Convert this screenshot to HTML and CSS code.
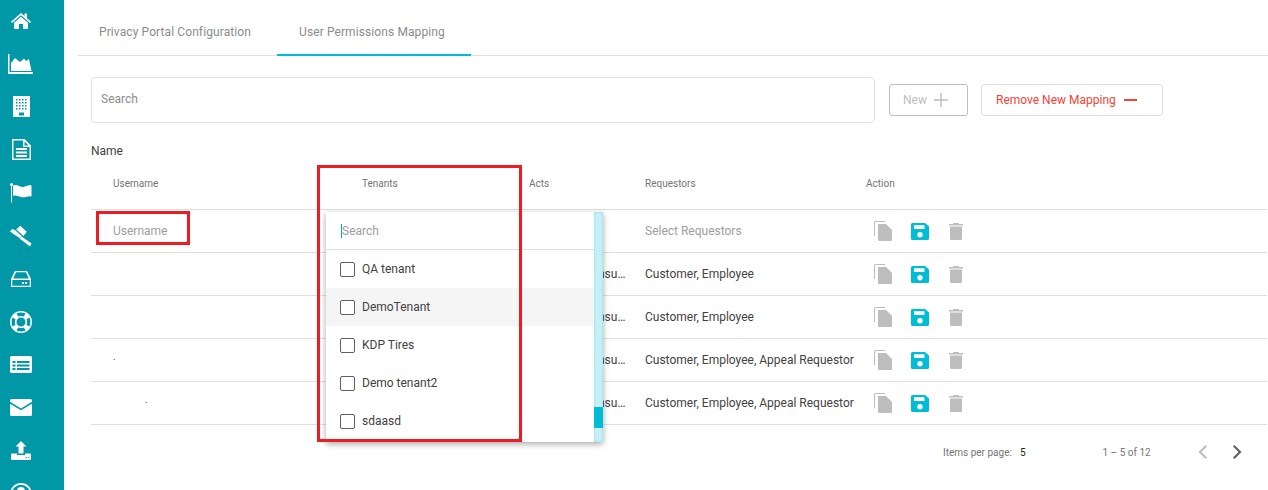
FILE: index.html
```html
<!DOCTYPE html>
<html lang="en">
<head>
    <meta charset="UTF-8">
    <title>User Permissions Mapping</title>
    <link rel="stylesheet" href="styles.css">
</head>
<body>
<div class="layout">
    <nav class="sidebar">
        <a class="nav-item"><svg width="20" height="18" viewBox="0 0 20 18"><path d="M10 1 13.5 4V1.5H16V6.2L20 9.7 19 11 10 3.2 1 11 0 9.7Z"/><path d="M10 4.8 17 10.8V17H12V12H8V17H3V10.8Z"/></svg></a>
        <a class="nav-item"><svg width="26" height="20" viewBox="0 0 26 20"><path d="M0 0H1.5V18H25V20H0Z"/><path d="M3 17V9L7 4 12 8 16 4.500 18 7 21 5 23.500 17Z"/></svg></a>
        <a class="nav-item"><svg width="18" height="22" viewBox="0 0 18 22"><path fill-rule="evenodd" d="M1 0H18V21H1ZM4 3V4.500H5.500V3ZM7 3V4.500H8.500V3ZM10 3V4.500H11.500V3ZM13 3V4.500H14.500V3ZM4 6V7.500H5.500V6ZM7 6V7.500H8.500V6ZM10 6V7.500H11.500V6ZM13 6V7.500H14.500V6ZM4 9V10.500H5.500V9ZM7 9V10.500H8.500V9ZM10 9V10.500H11.500V9ZM13 9V10.500H14.500V9ZM4 12V13.500H5.500V12ZM7 12V13.500H8.500V12ZM10 12V13.500H11.500V12ZM13 12V13.500H14.500V12ZM7 16.500V19.500H12V16.500Z"/></svg></a>
        <a class="nav-item"><svg width="19" height="21" viewBox="0 0 19 21"><path fill-rule="evenodd" d="M0 0H12.500L19 6.500V21H0ZM1.500 1.500V19.500H17.500V8H11V1.500ZM12.500 2.500V6.500H16.500ZM4 9H15V11H4ZM4 12.500H15V14.500H4ZM4 16H15V18H4Z"/></svg></a>
        <a class="nav-item"><svg width="22" height="20" viewBox="0 0 22 20"><path d="M1 1.500H2V19.500H1Z"/><circle cx="1.500" cy="1.500" r="1.500"/><path d="M3 2.500C7 .5 11 5 14 3.800 17 2.700 19 2 21.500 2.500V13.500C18 12.500 16 14.800 12 14.300 8.500 13.800 6 11.500 3 13Z"/></svg></a>
        <a class="nav-item"><svg width="22" height="22" viewBox="0 0 22 22"><path d="M10.300 .7 16.800 6.700 13.500 11 6.200 4.500Z"/><path d="M5 5 12 11.500 9.500 13 3.500 9 0 6.500 2 4Z"/><path d="M11.500 11.500 21.500 18.500 20 21.500 9.500 13.500Z"/></svg></a>
        <a class="nav-item"><svg width="20" height="16" viewBox="0 0 20 16"><path fill-rule="evenodd" d="M4 0H16L20 8V16H0V8ZM5 1.300 2.200 7.500H17.800L15 1.300ZM1.300 9V14.700H18.700V9ZM11 11H13V13H11ZM14 11H16V13H14Z"/></svg></a>
        <a class="nav-item"><svg width="22" height="22" viewBox="0 0 22 22"><path fill-rule="evenodd" d="M11 0A11 11 0 1 1 11 22 11 11 0 0 1 11 0ZM11 6.500A4.500 4.500 0 1 0 11 15.500 4.500 4.500 0 0 0 11 6.500ZM6.500 2.500 8.200 5.500C10 4.700 12 4.700 13.800 5.500L15.500 2.500C13 1.300 9 1.300 6.500 2.500ZM2.500 6.500C1.300 9 1.300 13 2.500 15.500L5.500 13.800C4.700 12 4.700 10 5.500 8.200ZM19.500 6.500 16.500 8.200C17.300 10 17.300 12 16.500 13.800L19.500 15.500C20.700 13 20.700 9 19.500 6.500ZM8.200 16.500 6.500 19.500C9 20.700 13 20.700 15.500 19.500L13.800 16.500C12 17.300 10 17.300 8.200 16.500Z"/></svg></a>
        <a class="nav-item"><svg width="22" height="17" viewBox="0 0 22 17"><path fill-rule="evenodd" d="M1.500 0H20.500Q22 0 22 1.500V15.500Q22 17 20.500 17H1.500Q0 17 0 15.500V1.500Q0 0 1.500 0ZM2.500 5V7H5.500V5ZM7 5V7H19.500V5ZM2.500 8.500V10.500H5.500V8.500ZM7 8.500V10.500H19.500V8.500ZM2.500 12V14H5.500V12ZM7 12V14H19.500V12Z"/></svg></a>
        <a class="nav-item"><svg width="22" height="17" viewBox="0 0 22 17"><path d="M0 1.500Q0 0 1.500 0H20.500Q22 0 22 1.500V2.800L11 9.500 0 2.800Z"/><path d="M0 4.800 11 11.300 22 4.800V15.500Q22 17 20.500 17H1.500Q0 17 0 15.500Z"/></svg></a>
        <a class="nav-item"><svg width="20" height="19" viewBox="0 0 20 19"><path d="M10 0 15.500 5.500H12.500V12.500H7.500V5.500H4.500Z"/><path fill-rule="evenodd" d="M1 12.500H6V14H14V12.500H19Q20 12.500 20 13.500V18Q20 19 19 19H1Q0 19 0 18V13.500Q0 12.500 1 12.500ZM14.500 16V17H15.700V16ZM17 16V17H18.200V16Z"/></svg></a>
        <a class="nav-item"><svg width="22" height="22" viewBox="0 0 22 22"><path fill-rule="evenodd" d="M11 0A11 11 0 1 1 11 22 11 11 0 0 1 11 0ZM11 1.800A9.200 9.200 0 1 0 11 20.200 9.200 9.200 0 0 0 11 1.800ZM11 4A4 4 0 1 1 11 12 4 4 0 0 1 11 4Z"/></svg></a>
    </nav>

    <main class="content">
        <div class="tabs">
            <div class="tab">Privacy Portal Configuration</div>
            <div class="tab tab-active">User Permissions Mapping</div>
        </div>

        <div class="toolbar">
            <div class="search-box">Search</div>
            <button class="btn btn-new">New <svg width="14" height="14" viewBox="0 0 14 14"><path d="M6.300 0H7.700V6.300H14V7.700H7.700V14H6.300V7.700H0V6.300H6.300Z"/></svg></button>
            <button class="btn btn-remove">Remove New Mapping <svg width="13" height="2" viewBox="0 0 13 2"><path d="M0 0H13V2H0Z"/></svg></button>
        </div>

        <div class="name-label">Name</div>

        <div class="table-wrap">
            <div class="row row-head">
                <div>Username</div>
                <div>Tenants</div>
                <div>Acts</div>
                <div>Requestors</div>
                <div>Action</div>
            </div>

            <div class="row">
                <div class="muted">Username</div>
                <div></div>
                <div></div>
                <div class="muted">Select Requestors</div>
                <div class="actions">
                    <svg class="ico" width="18" height="20" viewBox="0 0 18 20"><path d="M0 1.500Q0 0 1.500 0H11V1H1V15H0Z"/><path d="M4 3H12L18 9V18.500Q18 20 16.500 20H5.500Q4 20 4 18.500Z"/></svg>
                    <svg class="ico ico-save" width="18" height="17" viewBox="0 0 18 17"><path fill-rule="evenodd" d="M1.500 0H14L18 3.500V15.500Q18 17 16.500 17H1.500Q0 17 0 15.500V1.500Q0 0 1.500 0ZM3 2.200V6H13.500V2.200ZM9 9A2.700 2.700 0 1 0 9 14.400 2.700 2.700 0 0 0 9 9Z"/></svg>
                    <svg class="ico ico-trash" width="14" height="17" viewBox="0 0 14 17"><path d="M4.500 0H9.500L10 1H14V2.500H0V1H4Z"/><path d="M1 3.500H13V15.500Q13 17 11.500 17H2.500Q1 17 1 15.500Z"/></svg>
                </div>
            </div>

            <div class="row">
                <div></div>
                <div></div>
                <div class="clip">California Consumer Privacy Act</div>
                <div class="clip">Customer, Employee</div>
                <div class="actions">
                    <svg class="ico" width="18" height="20" viewBox="0 0 18 20"><path d="M0 1.500Q0 0 1.500 0H11V1H1V15H0Z"/><path d="M4 3H12L18 9V18.500Q18 20 16.500 20H5.500Q4 20 4 18.500Z"/></svg>
                    <svg class="ico ico-save" width="18" height="17" viewBox="0 0 18 17"><path fill-rule="evenodd" d="M1.500 0H14L18 3.500V15.500Q18 17 16.500 17H1.500Q0 17 0 15.500V1.500Q0 0 1.500 0ZM3 2.200V6H13.500V2.200ZM9 9A2.700 2.700 0 1 0 9 14.400 2.700 2.700 0 0 0 9 9Z"/></svg>
                    <svg class="ico ico-trash" width="14" height="17" viewBox="0 0 14 17"><path d="M4.500 0H9.500L10 1H14V2.500H0V1H4Z"/><path d="M1 3.500H13V15.500Q13 17 11.500 17H2.500Q1 17 1 15.500Z"/></svg>
                </div>
            </div>

            <div class="row">
                <div></div>
                <div></div>
                <div class="clip">California Consumer Privacy Act</div>
                <div class="clip">Customer, Employee</div>
                <div class="actions">
                    <svg class="ico" width="18" height="20" viewBox="0 0 18 20"><path d="M0 1.500Q0 0 1.500 0H11V1H1V15H0Z"/><path d="M4 3H12L18 9V18.500Q18 20 16.500 20H5.500Q4 20 4 18.500Z"/></svg>
                    <svg class="ico ico-save" width="18" height="17" viewBox="0 0 18 17"><path fill-rule="evenodd" d="M1.500 0H14L18 3.500V15.500Q18 17 16.500 17H1.500Q0 17 0 15.500V1.500Q0 0 1.500 0ZM3 2.200V6H13.500V2.200ZM9 9A2.700 2.700 0 1 0 9 14.400 2.700 2.700 0 0 0 9 9Z"/></svg>
                    <svg class="ico ico-trash" width="14" height="17" viewBox="0 0 14 17"><path d="M4.500 0H9.500L10 1H14V2.500H0V1H4Z"/><path d="M1 3.500H13V15.500Q13 17 11.500 17H2.500Q1 17 1 15.500Z"/></svg>
                </div>
            </div>

            <div class="row">
                <div class="redacted">.</div>
                <div></div>
                <div class="clip">California Consumer Privacy Act</div>
                <div class="clip">Customer, Employee, Appeal Requestor</div>
                <div class="actions">
                    <svg class="ico" width="18" height="20" viewBox="0 0 18 20"><path d="M0 1.500Q0 0 1.500 0H11V1H1V15H0Z"/><path d="M4 3H12L18 9V18.500Q18 20 16.500 20H5.500Q4 20 4 18.500Z"/></svg>
                    <svg class="ico ico-save" width="18" height="17" viewBox="0 0 18 17"><path fill-rule="evenodd" d="M1.500 0H14L18 3.500V15.500Q18 17 16.500 17H1.500Q0 17 0 15.500V1.500Q0 0 1.500 0ZM3 2.200V6H13.500V2.200ZM9 9A2.700 2.700 0 1 0 9 14.400 2.700 2.700 0 0 0 9 9Z"/></svg>
                    <svg class="ico ico-trash" width="14" height="17" viewBox="0 0 14 17"><path d="M4.500 0H9.500L10 1H14V2.500H0V1H4Z"/><path d="M1 3.500H13V15.500Q13 17 11.500 17H2.500Q1 17 1 15.500Z"/></svg>
                </div>
            </div>

            <div class="row">
                <div class="redacted redacted-far">.</div>
                <div></div>
                <div class="clip">California Consumer Privacy Act</div>
                <div class="clip">Customer, Employee, Appeal Requestor</div>
                <div class="actions">
                    <svg class="ico" width="18" height="20" viewBox="0 0 18 20"><path d="M0 1.500Q0 0 1.500 0H11V1H1V15H0Z"/><path d="M4 3H12L18 9V18.500Q18 20 16.500 20H5.500Q4 20 4 18.500Z"/></svg>
                    <svg class="ico ico-save" width="18" height="17" viewBox="0 0 18 17"><path fill-rule="evenodd" d="M1.500 0H14L18 3.500V15.500Q18 17 16.500 17H1.500Q0 17 0 15.500V1.500Q0 0 1.500 0ZM3 2.200V6H13.500V2.200ZM9 9A2.700 2.700 0 1 0 9 14.400 2.700 2.700 0 0 0 9 9Z"/></svg>
                    <svg class="ico ico-trash" width="14" height="17" viewBox="0 0 14 17"><path d="M4.500 0H9.500L10 1H14V2.500H0V1H4Z"/><path d="M1 3.500H13V15.500Q13 17 11.500 17H2.500Q1 17 1 15.500Z"/></svg>
                </div>
            </div>

            <div class="paginator">
                <span class="per-page">Items per page:</span>
                <span class="per-page-value">5</span>
                <span class="range">1 – 5 of 12</span>
                <svg class="chev chev-off" width="10" height="14" viewBox="0 0 10 14"><path d="M8.500 0 10 1.500 4.500 7 10 12.500 8.500 14 1.500 7Z"/></svg>
                <svg class="chev" width="10" height="14" viewBox="0 0 10 14"><path d="M1.500 0 0 1.500 5.500 7 0 12.500 1.500 14 8.500 7Z"/></svg>
            </div>
        </div>
    </main>
</div>

<!-- dropdown open over the table -->
<div class="dropdown">
    <div class="dropdown-main">
        <div class="dropdown-search"><span class="caret"></span>Search</div>
        <div class="option"><span class="checkbox"></span>QA tenant</div>
        <div class="option option-hover"><span class="checkbox"></span>DemoTenant</div>
        <div class="option"><span class="checkbox"></span>KDP Tires</div>
        <div class="option"><span class="checkbox"></span>Demo tenant2</div>
        <div class="option"><span class="checkbox"></span>sdaasd</div>
    </div>
    <div class="scroll-track"><div class="scroll-thumb"></div></div>
</div>

<!-- annotation boxes from the screenshot -->
<div class="mark mark-tenants"></div>
<div class="mark mark-username"></div>
</body>
</html>
```

FILE: styles.css
```css
* {
    box-sizing: border-box;
}
html, body {
    margin: 0;
    height: 490px;
    overflow: hidden;
}
body {
    position: relative;
    font-family: Roboto, "Liberation Sans", sans-serif;
    font-size: 12px;
    color: #424242;
    background-color: #FFFFFF;
}
.layout {
    display: flex;
    height: 490px;
}

/* sidebar */
.sidebar {
    width: 64px;
    flex: none;
    background-color: #0097A7;
    padding-top: 0;
    overflow: hidden;
}
.nav-item {
    display: flex;
    align-items: center;
    justify-content: center;
    width: 42px;
    height: 43px;
    margin-top: -1px;
    margin-bottom: 1px;
}
.nav-item svg {
    fill: #FFFFFF;
}

/* content */
.content {
    flex: 1;
    min-width: 0;
    padding-left: 14px;
}
.tabs {
    display: flex;
    height: 56px;
    margin-left: 0;
    border-bottom: 1px solid #E0E0E0;
}
.tab {
    width: 199px;
    padding-top: 25px;
    padding-left: 21px;
    font-size: 12px;
    letter-spacing: .1px;
    color: #8C8C8C;
}
.tab-active {
    width: 194px;
    padding-left: 22px;
    border-bottom: 2px solid #00BCD4;
    height: 56px;
}
.toolbar {
    display: flex;
    align-items: center;
    margin-top: 21px;
    margin-left: 13px;
}
.search-box {
    width: 784px;
    height: 46px;
    padding: 14px 9px;
    border: 1px solid #E0E0E0;
    border-radius: 4px;
    color: #8C8C8C;
}
.btn {
    display: flex;
    align-items: center;
    height: 32px;
    background: #FFFFFF;
    border-radius: 3px;
    font-family: inherit;
    font-size: 12px;
    padding: 0;
}
.btn-new {
    width: 79px;
    margin-left: 14px;
    padding-left: 13px;
    gap: 7px;
    border: 1px solid #BDBDBD;
    color: #BDBDBD;
}
.btn-new svg {
    fill: #BDBDBD;
}
.btn-remove {
    width: 182px;
    margin-left: 13px;
    padding-left: 14px;
    gap: 8px;
    border: 1px solid #E0E0E0;
    color: #F44336;
}
.btn-remove svg {
    fill: #F44336;
}
.name-label {
    margin: 21px 0 0 13px;
    line-height: 14px;
}

/* table */
.table-wrap {
    margin-left: 13px;
}
.row {
    display: grid;
    grid-template-columns: 249px 167px 116px 221px 1fr;
    align-items: center;
    height: 43px;
    padding-left: 22px;
    border-bottom: 1px solid #E0E0E0;
    margin-right: 1px;
}
.row-head {
    height: 52px;
    font-size: 10px;
    color: #757575;
}
.muted {
    color: #9E9E9E;
}
.clip {
    max-width: 106px;
    white-space: nowrap;
    overflow: hidden;
    text-overflow: ellipsis;
}
.clip + .clip {
    max-width: 209px;
}
.redacted {
    font-size: 10px;
    margin-top: -8px;
}
.redacted-far {
    margin-left: 32px;
}
.actions {
    display: flex;
    align-items: center;
    margin-left: 8px;
}
.ico {
    fill: #BDBDBD;
}
.ico-save {
    fill: #00BCD4;
    margin-left: 19px;
}
.ico-trash {
    margin-left: 20px;
}
.paginator {
    display: flex;
    align-items: center;
    height: 54px;
    padding-left: 852px;
    font-size: 10px;
    color: #757575;
}
.per-page-value {
    margin-left: 8px;
    color: #212121;
}
.range {
    margin-left: 77px;
}
.chev {
    fill: #616161;
    margin-left: 26px;
}
.chev-off {
    fill: #BDBDBD;
    margin-left: 46px;
}

/* dropdown */
.dropdown {
    position: absolute;
    left: 326px;
    top: 212px;
    width: 277px;
    height: 230px;
    display: flex;
    background: #FFFFFF;
    box-shadow: 0 2px 6px rgba(0, 0, 0, .35);
    overflow: hidden;
}
.dropdown-main {
    flex: 1;
    min-width: 0;
}
.dropdown-search {
    display: flex;
    align-items: center;
    height: 38px;
    padding-left: 15px;
    border-bottom: 1px solid #E0E0E0;
    color: #9E9E9E;
}
.caret {
    width: 1px;
    height: 14px;
    background: #00ACC1;
}
.option {
    display: flex;
    align-items: center;
    height: 38px;
    padding-left: 14px;
    gap: 7px;
}
.option-hover {
    background-color: #F5F5F5;
}
.checkbox {
    width: 15px;
    height: 15px;
    border: 1px solid #616161;
    border-radius: 2px;
    background: #FFFFFF;
}
.scroll-track {
    position: relative;
    width: 9px;
    background: #C5F0F5;
    box-shadow: inset 0 0 3px #80DEEA;
}
.scroll-thumb {
    position: absolute;
    left: 0;
    right: 0;
    top: 195px;
    height: 21px;
    background: #00BCD4;
}

/* red annotation boxes */
.mark {
    position: absolute;
    border: 3px solid #ED1C24;
}
.mark-tenants {
    left: 317px;
    top: 165px;
    width: 205px;
    height: 277px;
}
.mark-username {
    left: 96px;
    top: 211px;
    width: 94px;
    height: 34px;
}
```
